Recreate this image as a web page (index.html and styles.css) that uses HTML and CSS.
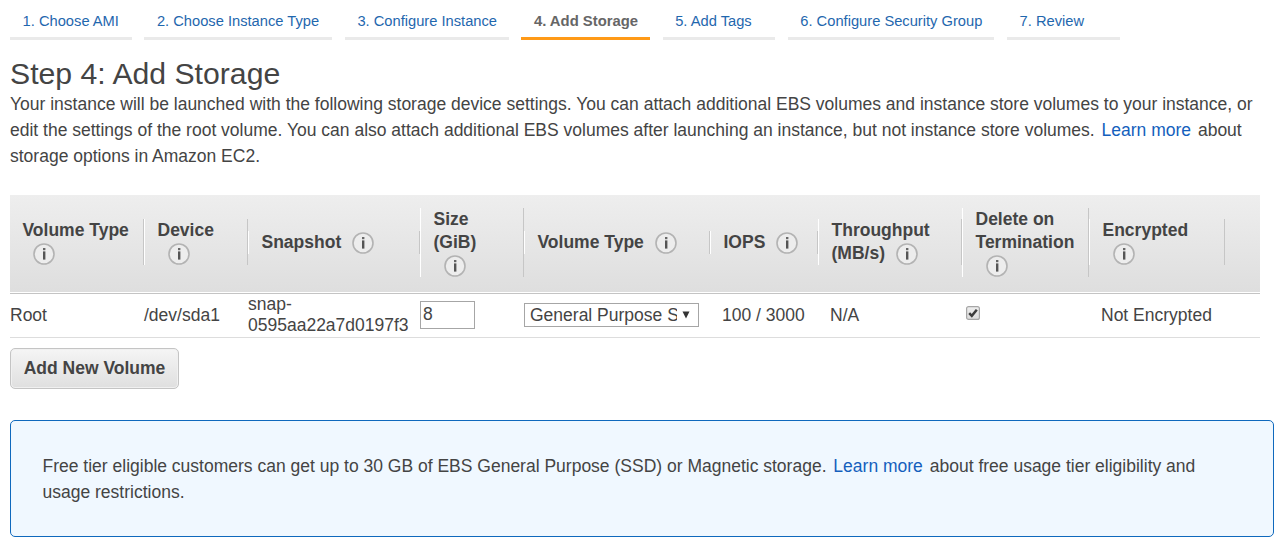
FILE: index.html
```html
<!DOCTYPE html>
<html lang="en">
<head>
<meta charset="utf-8">
<title>Step 4: Add Storage</title>
<link rel="stylesheet" href="styles.css">
</head>
<body>
<svg width="0" height="0" class="defs">
  <symbol id="info" viewBox="0 0 22 22">
    <circle cx="11" cy="11" r="10" fill="#ededed" stroke="#b3b3b3" stroke-width="1.6"/>
    <rect x="10" y="5" width="2.4" height="2.2" fill="#666"/>
    <rect x="10" y="8.4" width="2.4" height="8.2" fill="#555"/>
  </symbol>
</svg>
<nav class="steps">
  <a class="step">1. Choose AMI</a>
  <a class="step">2. Choose Instance Type</a>
  <a class="step">3. Configure Instance</a>
  <a class="step active">4. Add Storage</a>
  <a class="step">5. Add Tags</a>
  <a class="step">6. Configure Security Group</a>
  <a class="step">7. Review</a>
</nav>
<main>
  <h1>Step 4: Add Storage</h1>
  <p class="intro">Your instance will be launched with the following storage device settings. You can attach additional EBS volumes and instance store volumes to your instance, or<br>edit the settings of the root volume. You can also attach additional EBS volumes after launching an instance, but not instance store volumes. <a class="link">Learn more</a> about<br>storage options in Amazon EC2.</p>

  <section class="volumes">
    <div class="grid head">
      <div class="label first">Volume Type<br><svg class="info"><use href="#info"/></svg></div>
      <div class="label two">Device<br><svg class="info"><use href="#info"/></svg></div>
      <div class="label">Snapshot<svg class="info"><use href="#info"/></svg></div>
      <div class="label">Size<br>(GiB)<br><svg class="info"><use href="#info"/></svg></div>
      <div class="label">Volume Type<svg class="info"><use href="#info"/></svg></div>
      <div class="label">IOPS<svg class="info"><use href="#info"/></svg></div>
      <div class="label two">Throughput<br>(MB/s)<svg class="info"><use href="#info"/></svg></div>
      <div class="label">Delete on<br>Termination<br><svg class="info"><use href="#info"/></svg></div>
      <div class="label two">Encrypted<br><svg class="info"><use href="#info"/></svg></div>
    </div>
    <div class="grid row">
      <div>Root</div>
      <div>/dev/sda1</div>
      <div class="snap">snap-<br>0595aa22a7d0197f3</div>
      <div><div class="size">8</div></div>
      <div><div class="select"><span class="value">General Purpose S</span><svg class="arrow" viewBox="0 0 8 8"><path d="M0.5 0.5h7L4 7.5z" fill="#333"/></svg></div></div>
      <div class="iops">100 / 3000</div>
      <div class="thr">N/A</div>
      <div class="del"><svg class="check" viewBox="0 0 14 14"><defs><linearGradient id="cb" x2="0" y2="1"><stop offset="0" stop-color="#eee"/><stop offset="1" stop-color="#dcdcdc"/></linearGradient></defs><rect x=".6" y=".6" width="12.8" height="12.8" rx="2" fill="url(#cb)" stroke="#a6a6a6" stroke-width="1.2"/><path d="M3.2 7.2l2.6 2.6 5-6" fill="none" stroke="#3c3c3c" stroke-width="2.5"/></svg></div>
      <div class="enc">Not Encrypted</div>
    </div>
  </section>

  <button class="add">Add New Volume</button>

  <aside class="notice">Free tier eligible customers can get up to 30 GB of EBS General Purpose (SSD) or Magnetic storage. <a class="link">Learn more</a> about free usage tier eligibility and<br>usage restrictions.</aside>
</main>
</body>
</html>
```
FILE: styles.css
```css
* { box-sizing: border-box; }
body {
  margin: 0;
  height: 555px;
  overflow: hidden;
  background: #fff;
  color: #444;
  font: 17.5px/26px "Liberation Sans", Arial, sans-serif;
  white-space: nowrap;
}
.defs { position: absolute; }
.steps {
  display: grid;
  grid-template-columns: 121.8px 188px 164px 128.8px 112.6px 206.8px 113px;
  column-gap: 12.5px;
  padding-left: 10px;
  height: 40px;
}
.step {
  padding: 11px 0 0 12.6px;
  border-bottom: 3px solid #eaeaea;
  color: #1f67ae;
  font-size: 14.7px;
  line-height: 20px;
}
.active { border-color: #ff9a17; color: #666; font-weight: bold; font-size: 14.85px; }
main { padding: 0 13px 0 10px; }
h1 {
  margin: 16px 0 0;
  font-size: 30.2px;
  line-height: 35px;
  font-weight: normal;
}
.intro { margin: 0; }
.link { color: #145fbd; margin: 0 2px; }
.volumes { width: 1250px; margin-top: 26px; }
.grid {
  display: grid;
  grid-template-columns: 134px 104px 172px 104px 186px 108px 144px 127px 136px;
  align-items: center;
}
.head {
  height: 99px;
  padding-bottom: 3px;
  background: linear-gradient(#eee, #dedede);
  border-bottom: 1px solid #c4c4c4;
  box-shadow: inset 0 -1px #fff;
  font-weight: bold;
  line-height: 23px;
}
.label {
  border-left: 1px solid #fff;
  border-right: 1px solid #c6c6c6;
  padding-left: 12.5px;
}
.first { border-left: 0; }
.first, .two { margin-bottom: 1px; }
.info {
  width: 22px;
  height: 22px;
  margin: -4px 0 -4px 10.7px;
  vertical-align: -2px;
}
.row { height: 44px; padding-bottom: 2px; border-bottom: 1px solid #ddd; }
.snap { line-height: 21px; }
.size {
  width: 55px;
  height: 28px;
  border: 1px solid #a6a6a6;
  padding-left: 2px;
  line-height: 24px;
}
.select {
  display: flex;
  align-items: center;
  width: 175px;
  height: 24px;
  border: 1px solid #a6a6a6;
  padding-left: 5px;
}
.value { width: 147px; overflow: hidden; }
.arrow { width: 8px; height: 8px; margin-left: 5px; }
.iops { padding-left: 12px; }
.thr { padding-left: 12px; }
.del { padding: 0 0 4px 4px; }
.enc { padding-left: 12px; }
.check { display: block; width: 14px; height: 14px; }
.add {
  display: block;
  width: 169px;
  height: 41px;
  margin-top: 10px;
  padding: 0 0 2px;
  border: 1px solid #c4c4c4;
  border-radius: 5px;
  background: linear-gradient(#f5f5f5, #dfdfdf);
  box-shadow: inset 0 0 0 1px #f0f0f0;
  color: #444;
  font: bold 17.5px/26px "Liberation Sans", Arial, sans-serif;
}
.notice {
  height: 117px;
  margin-top: 31px;
  padding: 32px 31.5px;
  border: 1px solid #0f69bd;
  border-radius: 5px;
  background: #f0f8ff;
}
```
